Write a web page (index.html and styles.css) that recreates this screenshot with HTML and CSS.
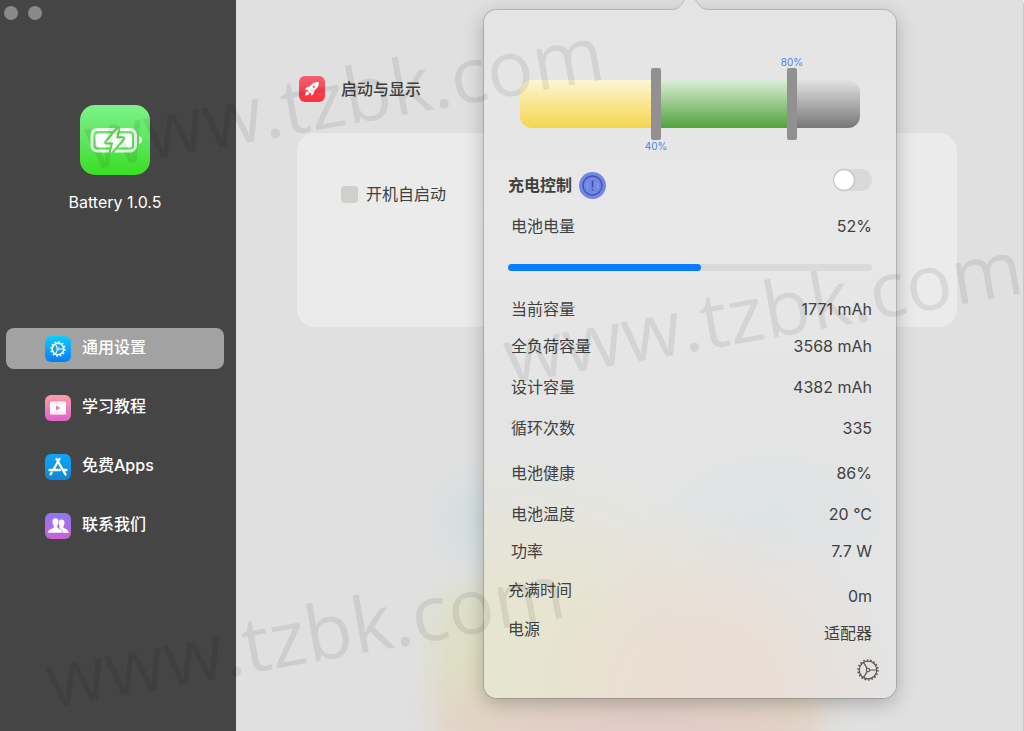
FILE: index.html
```html
<!DOCTYPE html>
<html lang="zh-CN">
<head>
	<meta charset="UTF-8">
	<title>Battery</title>
	<link rel="stylesheet" href="styles.css">
</head>
<body>
<div class="window">
	<div class="sidebar">
		<div class="lights"><i></i><i></i></div>
		<div class="app">
			<svg class="app-icon" viewBox="0 0 70 70">
				<defs>
					<linearGradient id="gApp" x1="0" y1="0" x2="0" y2="1"><stop offset="0" stop-color="#7bf287"/><stop offset=".5" stop-color="#5fe65f"/><stop offset="1" stop-color="#38df22"/></linearGradient>
				</defs>
				<rect width="70" height="70" rx="15" fill="url(#gApp)"/>
				<rect x="12" y="24.500" width="43.500" height="21.500" rx="5.500" fill="none" stroke="#f4fff2" stroke-width="3"/>
				<rect x="15.500" y="28.500" width="36.500" height="14" rx="2.500" fill="#fff"/>
				<path d="M59 31c4 1.500 4 6.500 0 8z" fill="#f4fff2"/>
				<path d="M38.500 22.500 26 37.500h7.300L30.300 49 43.500 33.300h-7.300z" fill="#fff" stroke="#58e052" stroke-width="4" stroke-linejoin="round"/>
				<path d="M38.500 23 26 37.500h7.300L30.300 48.500 43.500 33.300h-7.300z" fill="#fff"/>
			</svg>
			<p>Battery 1.0.5</p>
		</div>
		<nav class="nav">
			<a href="#" class="on">
				<svg viewBox="0 0 26 26">
					<defs><linearGradient id="gSet" x1="0" y1="0" x2="0" y2="1"><stop offset="0" stop-color="#12cdf8"/><stop offset="1" stop-color="#0a7bf4"/></linearGradient></defs>
					<rect width="26" height="26" rx="6" fill="url(#gSet)"/>
					<g fill="none" stroke="#fff">
						<circle cx="13" cy="13" r="7" stroke-width="1.400" stroke-dasharray="1.800 1.865"/>
						<circle cx="13" cy="13" r="5.700" stroke-width="1.500"/>
						<circle cx="13" cy="13" r="1.200" stroke-width="1"/>
						<path d="M14.500 13h4M12.300 11.800l-2-3.700M12.300 14.200l-2 3.700" stroke-width="1.100"/>
					</g>
				</svg>
				<span>通用设置</span>
			</a>
			<a href="#">
				<svg viewBox="0 0 26 26">
					<defs><linearGradient id="gVid" x1="0" y1="0" x2="0" y2="1"><stop offset="0" stop-color="#f7a0a5"/><stop offset="1" stop-color="#df62cd"/></linearGradient></defs>
					<rect width="26" height="26" rx="6" fill="url(#gVid)"/>
					<rect x="5" y="6.500" width="16" height="13" rx="1.500" fill="#fff"/>
					<path d="M6.500 8.200h13M6.500 17.800h13" stroke="#ee84ba" stroke-width=".8" stroke-dasharray="1 1.400"/>
					<path d="M11 10.500v5l4.500-2.500z" fill="#e97dbb"/>
				</svg>
				<span>学习教程</span>
			</a>
			<a href="#">
				<svg viewBox="0 0 26 26">
					<defs><linearGradient id="gApps" x1="0" y1="0" x2="0" y2="1"><stop offset="0" stop-color="#0fa6fa"/><stop offset="1" stop-color="#1286d2"/></linearGradient></defs>
					<rect width="26" height="26" rx="6" fill="url(#gApps)"/>
					<g fill="none" stroke="#fff" stroke-width="2.300" stroke-linecap="round">
						<path d="M11.500 5 20.500 20.500M14.500 5 8.200 16M6.600 18.600 5.700 20.300M4.500 16h10.500M18.500 16h3"/>
					</g>
				</svg>
				<span>免费Apps</span>
			</a>
			<a href="#">
				<svg viewBox="0 0 26 26">
					<defs><linearGradient id="gUs" x1="0" y1="0" x2="0" y2="1"><stop offset="0" stop-color="#8b78f8"/><stop offset="1" stop-color="#cd61d5"/></linearGradient></defs>
					<rect width="26" height="26" rx="6" fill="url(#gUs)"/>
					<path d="M16.500 6.500c2 0 3 1.500 3 3.300 0 1.800-.8 2.700-1.200 3.700v1.300c1.200 1 5.200 1.500 5.500 5.200h-6.500l-3-5.500c1-1.500-.8-2.500-.8-4.700 0-2 1-3.300 3-3.300z" fill="#fff"/>
					<path d="M10.500 5c2.200 0 3.300 1.600 3.300 3.700 0 2-.9 3.300-1.400 4.300v1.500c1.300 1 5.200 1.700 5.600 5.500H2.500c.4-3.800 4.500-4.500 6-5.500V13c-.5-1-1.300-2.300-1.300-4.300C7.200 6.600 8.300 5 10.500 5z" fill="#fff" stroke="#ae6ce8" stroke-width=".600"/>
				</svg>
				<span>联系我们</span>
			</a>
		</nav>
	</div>

	<div class="main">
		<h2>
			<svg viewBox="0 0 26 26">
				<defs><linearGradient id="gRun" x1="0" y1="0" x2="0" y2="1"><stop offset="0" stop-color="#f45f6e"/><stop offset="1" stop-color="#fb2f3c"/></linearGradient></defs>
				<rect width="26" height="26" rx="6" fill="url(#gRun)"/>
				<path d="M19.800 6c-4-.2-6.600 1.300-8.800 4.200l-3 .7-2 2.600 2.800.4c.3 1.800 1.300 2.800 3 3.200l.6 2.700 2.400-2.200.7-3.200c3-2 4.500-4.800 4.300-8.400z" fill="#fff"/>
				<path d="M8.300 15.200c-1.500.6-1.900 2-2 4.300 2.200-.2 3.500-.8 4.100-2.200" fill="#fff"/>
				<circle cx="14.800" cy="10.900" r="1.100" fill="#f8505e"/>
			</svg>
			启动与显示
		</h2>
		<div class="card">
			<label><input type="checkbox">开机自启动</label>
		</div>
	</div>

	<!-- 菜单栏弹窗 -->
	<div class="popover">
		<svg class="arrow" viewBox="0 0 40 12">
			<path d="M0 12V11C8 10.500 9 8.500 13 3L16-1H24L27 3C31 8.500 32 10.500 40 11V12z" fill="#e4e4e4"/>
			<path d="M0 10.500C8 10.500 9 8.500 13 3L16-1M24-1 27 3C31 8.500 32 10.500 40 10.500" fill="none" stroke="#b9b9b9"/>
		</svg>
		<div class="limit">
			<label class="max" for="max">80%</label>
			<div class="range">
				<div class="bar"><i class="low"></i><i class="mid"></i><i class="high"></i></div>
				<input type="range" id="min" min="0" max="100" value="40">
				<input type="range" id="max" min="0" max="100" value="80">
			</div>
			<label class="min" for="min">40%</label>
		</div>
		<div class="control">
			<label for="charge">充电控制</label>
			<button class="info" aria-label="说明">
				<svg viewBox="0 0 27 27">
					<circle cx="13.500" cy="13.500" r="13.500" fill="#7388e2"/>
					<circle cx="13.500" cy="13.500" r="9.500" fill="none" stroke="#4257b4" stroke-width="1.500"/>
					<path d="M13.500 8.500v7M13.500 17.300v1.500" stroke="#3c4da4" stroke-width="1.500"/>
					<path d="M9 11c-.8 1.500-.8 3.500 0 5M18 11c.8 1.500.8 3.500 0 5" fill="none" stroke="#98a8f0"/>
				</svg>
			</button>
			<input type="checkbox" class="switch" id="charge">
		</div>
		<div class="row level"><span>电池电量</span><b>52%</b></div>
		<progress max="100" value="53" aria-label="电池电量"></progress>
		<div class="row"><span>当前容量</span><b>1771 mAh</b></div>
		<div class="row near"><span>全负荷容量</span><b>3568 mAh</b></div>
		<div class="row"><span>设计容量</span><b>4382 mAh</b></div>
		<div class="row"><span>循环次数</span><b>335</b></div>
		<div class="row far"><span>电池健康</span><b>86%</b></div>
		<div class="row"><span>电池温度</span><b>20 °C</b></div>
		<div class="row near"><span>功率</span><b>7.7 W</b></div>
		<div class="power">
			<div class="names"><span>充满时间</span><span>电源</span></div>
			<div class="values"><b>0m</b><b>适配器</b></div>
		</div>
		<button class="gear" aria-label="设置">
			<svg viewBox="0 0 22 22">
				<g fill="none" stroke="#565656">
					<circle cx="11" cy="11" r="10" stroke-width="1.400" stroke-dasharray="1.700 1.792"/>
					<circle cx="11" cy="11" r="8.800" stroke-width="1.200"/>
					<circle cx="11" cy="11" r="1.700" stroke-width="1.100"/>
					<path d="M12.800 11h7M10.100 9.400 6.600 3.500M10.100 12.600 6.600 18.500" stroke-width="1.200"/>
				</g>
			</svg>
		</button>
	</div>

	<div class="watermark w1">www.tzbk.com</div>
	<div class="watermark w2">www.tzbk.com</div>
	<div class="watermark w3">www.tzbk.com</div>
</div>
</body>
</html>
```
FILE: styles.css
```css
*{
	margin: 0;
	padding: 0;
	box-sizing: border-box;
}
body{
	font: 16px/24px Inter, "Noto Sans CJK SC", sans-serif;
	color: #414141;
	background: #e6e6e6;
}
button{
	border: none;
	background: none;
}
svg{
	display: block;
}
.window{
	position: relative;
	display: flex;
	min-height: 100vh;
	overflow: hidden;
}

/* 左侧栏 */
.sidebar{
	width: 236px;
	flex: none;
	padding: 6px 12px 0 6px;
	background: #454545;
	color: #fff;
}
.lights{
	display: flex;
	gap: 10px;
	margin-left: -2px;
}
.lights i{
	width: 14px;
	height: 14px;
	border-radius: 50%;
	background: #898989;
}
.app{
	display: flex;
	flex-direction: column;
	align-items: center;
	gap: 15px;
	margin-top: 85px;
}
.app-icon{
	width: 70px;
	height: 70px;
}
.nav{
	display: flex;
	flex-direction: column;
	gap: 18px;
	margin-top: 114px;
}
.nav a{
	display: flex;
	align-items: center;
	gap: 11px;
	height: 41px;
	padding-left: 39px;
	border-radius: 8px;
	color: #fff;
	font-weight: 500;
	text-decoration: none;
}
.nav a.on{
	background: #a2a2a2;
}
.nav svg,
.main h2 svg{
	width: 26px;
	height: 26px;
}
.nav span{
	padding-bottom: 3px;
}

/* 主区域 */
.main{
	position: relative;
	flex: 1;
	padding: 76px 66px 0 61px;
	border-right: 1px solid #c8c8c8;
	border-top-right-radius: 6px;
	background: radial-gradient(ellipse 55px 60px at 240px 520px, rgba(200,220,224,.6), transparent), #e0e0e0;
	overflow: hidden;
}
/* 桌面透过来的色块 */
.main:before{
	content: "";
	position: absolute;
	right: 200px;
	bottom: -30px;
	width: 390px;
	height: 180px;
	border-radius: 40px;
	background:
		radial-gradient(ellipse 220px 130px at 55% 100%, #e4c4c0, transparent),
		linear-gradient(#dcdfc8, #dedfbc 45%, #e2d2bf 75%);
	filter: blur(14px);
	opacity: .8;
}
.main h2{
	display: flex;
	align-items: center;
	gap: 16px;
	margin-left: 2px;
	font-size: 16px;
	font-weight: 500;
}
.card{
	min-height: 194px;
	margin-top: 31px;
	padding: 49px 44px;
	border-radius: 18px;
	background: #ebebeb;
}
.card label{
	display: flex;
	align-items: center;
	gap: 8px;
}
.card input{
	appearance: none;
	width: 17px;
	height: 17px;
	border-radius: 4px;
	background: #cfd0cb;
}

/* 弹窗 */
.popover{
	position: absolute;
	top: 10px;
	right: 128px;
	width: 412px;
	padding: 46px 24px 17px;
	border-radius: 13px;
	background:
		radial-gradient(ellipse 190px 190px at 220px 100%, rgba(234,221,210,.9) 30%, transparent),
		radial-gradient(ellipse 240px 210px at 40px 95%, rgba(231,229,206,.9) 30%, transparent),
		radial-gradient(ellipse 130px 70px at 290px 505px, rgba(219,227,228,.7), transparent),
		linear-gradient(#e4e4e4, #e8e8e8 30%, #e4e4e4 60%);
	box-shadow: 0 0 0 1px rgba(0,0,0,.14), 0 5px 20px rgba(0,0,0,.25);
}
.arrow{
	position: absolute;
	top: -11px;
	left: 50%;
	width: 40px;
	height: 12px;
	margin-left: -20px;
}
.limit{
	margin: 0 12px;
}
.limit label{
	display: block;
	color: #4a86ee;
	font-size: 10px;
	line-height: 12px;
	text-align: center;
}
.limit .max{
	margin-left: 60%;
}
.limit .min{
	margin-right: 20%;
}
.range{
	position: relative;
	padding: 12px 0;
}
.bar{
	display: flex;
	height: 48px;
	border-radius: 12px;
	overflow: hidden;
}
.bar .low{
	width: 40%;
	background: linear-gradient(#fdf6d4, #f5d54e);
}
.bar .mid{
	width: 40%;
	background: linear-gradient(#dcedd8, #50a33c);
}
.bar .high{
	width: 20%;
	background: linear-gradient(#e2e2e2, #777);
}
/* 两个滑块叠在电池条上 */
.range input{
	appearance: none;
	position: absolute;
	top: 0;
	left: -5px;
	width: calc(100% + 10px);
	height: 72px;
	background: none;
	pointer-events: none;
}
.range input::-webkit-slider-thumb{
	appearance: none;
	width: 10px;
	height: 72px;
	border-radius: 2px;
	background: #929091;
	pointer-events: auto;
}
.control{
	display: flex;
	align-items: center;
	gap: 7px;
	height: 32px;
	margin-top: 17px;
}
.control label{
	font-weight: 700;
}
.info svg{
	width: 27px;
	height: 27px;
}
.switch{
	appearance: none;
	display: flex;
	align-self: flex-start;
	width: 39px;
	height: 22px;
	margin-left: auto;
	padding: 1px;
	border-radius: 11px;
	background: #d9d9d9;
}
.switch:before{
	content: "";
	width: 20px;
	height: 20px;
	border-radius: 50%;
	background: #fff;
	box-shadow: 0 0 2px rgba(0,0,0,.4);
}
.switch:checked{
	justify-content: flex-end;
	background: #0a7cff;
}
.row{
	display: flex;
	justify-content: space-between;
	margin-top: 17px;
	padding-left: 3px;
}
.row.near,
.row.level{
	margin-top: 13px;
}
.row.far{
	margin-top: 21px;
}
.popover b{
	font-weight: 400;
}
progress{
	appearance: none;
	display: block;
	width: 100%;
	height: 7px;
	margin: 26px 0;
}
progress::-webkit-progress-bar{
	border-radius: 4px;
	background: #dadada;
}
progress::-webkit-progress-value{
	border-radius: 4px;
	background: #0a7cff;
}
.power{
	display: flex;
	justify-content: space-between;
	margin-top: 15px;
}
.names,
.values{
	display: flex;
	flex-direction: column;
	gap: 15px;
}
.values{
	gap: 13px;
	margin-top: 6px;
	text-align: right;
}
.gear{
	display: block;
	margin: 14px -7px 0 auto;
}
.gear svg{
	width: 22px;
	height: 22px;
}

/* 水印 */
.watermark{
	position: absolute;
	color: rgba(0,0,0,.08);
	font: 77px/80px "Open Sans", "Noto Sans", sans-serif;
	white-space: nowrap;
	transform: rotate(-10deg);
	transform-origin: 0 100%;
	pointer-events: none;
}
.w1{
	left: 92px;
	top: 101px;
}
.w2{
	left: 511px;
	top: 315px;
}
.w3{
	left: 53px;
	top: 639px;
}
```
